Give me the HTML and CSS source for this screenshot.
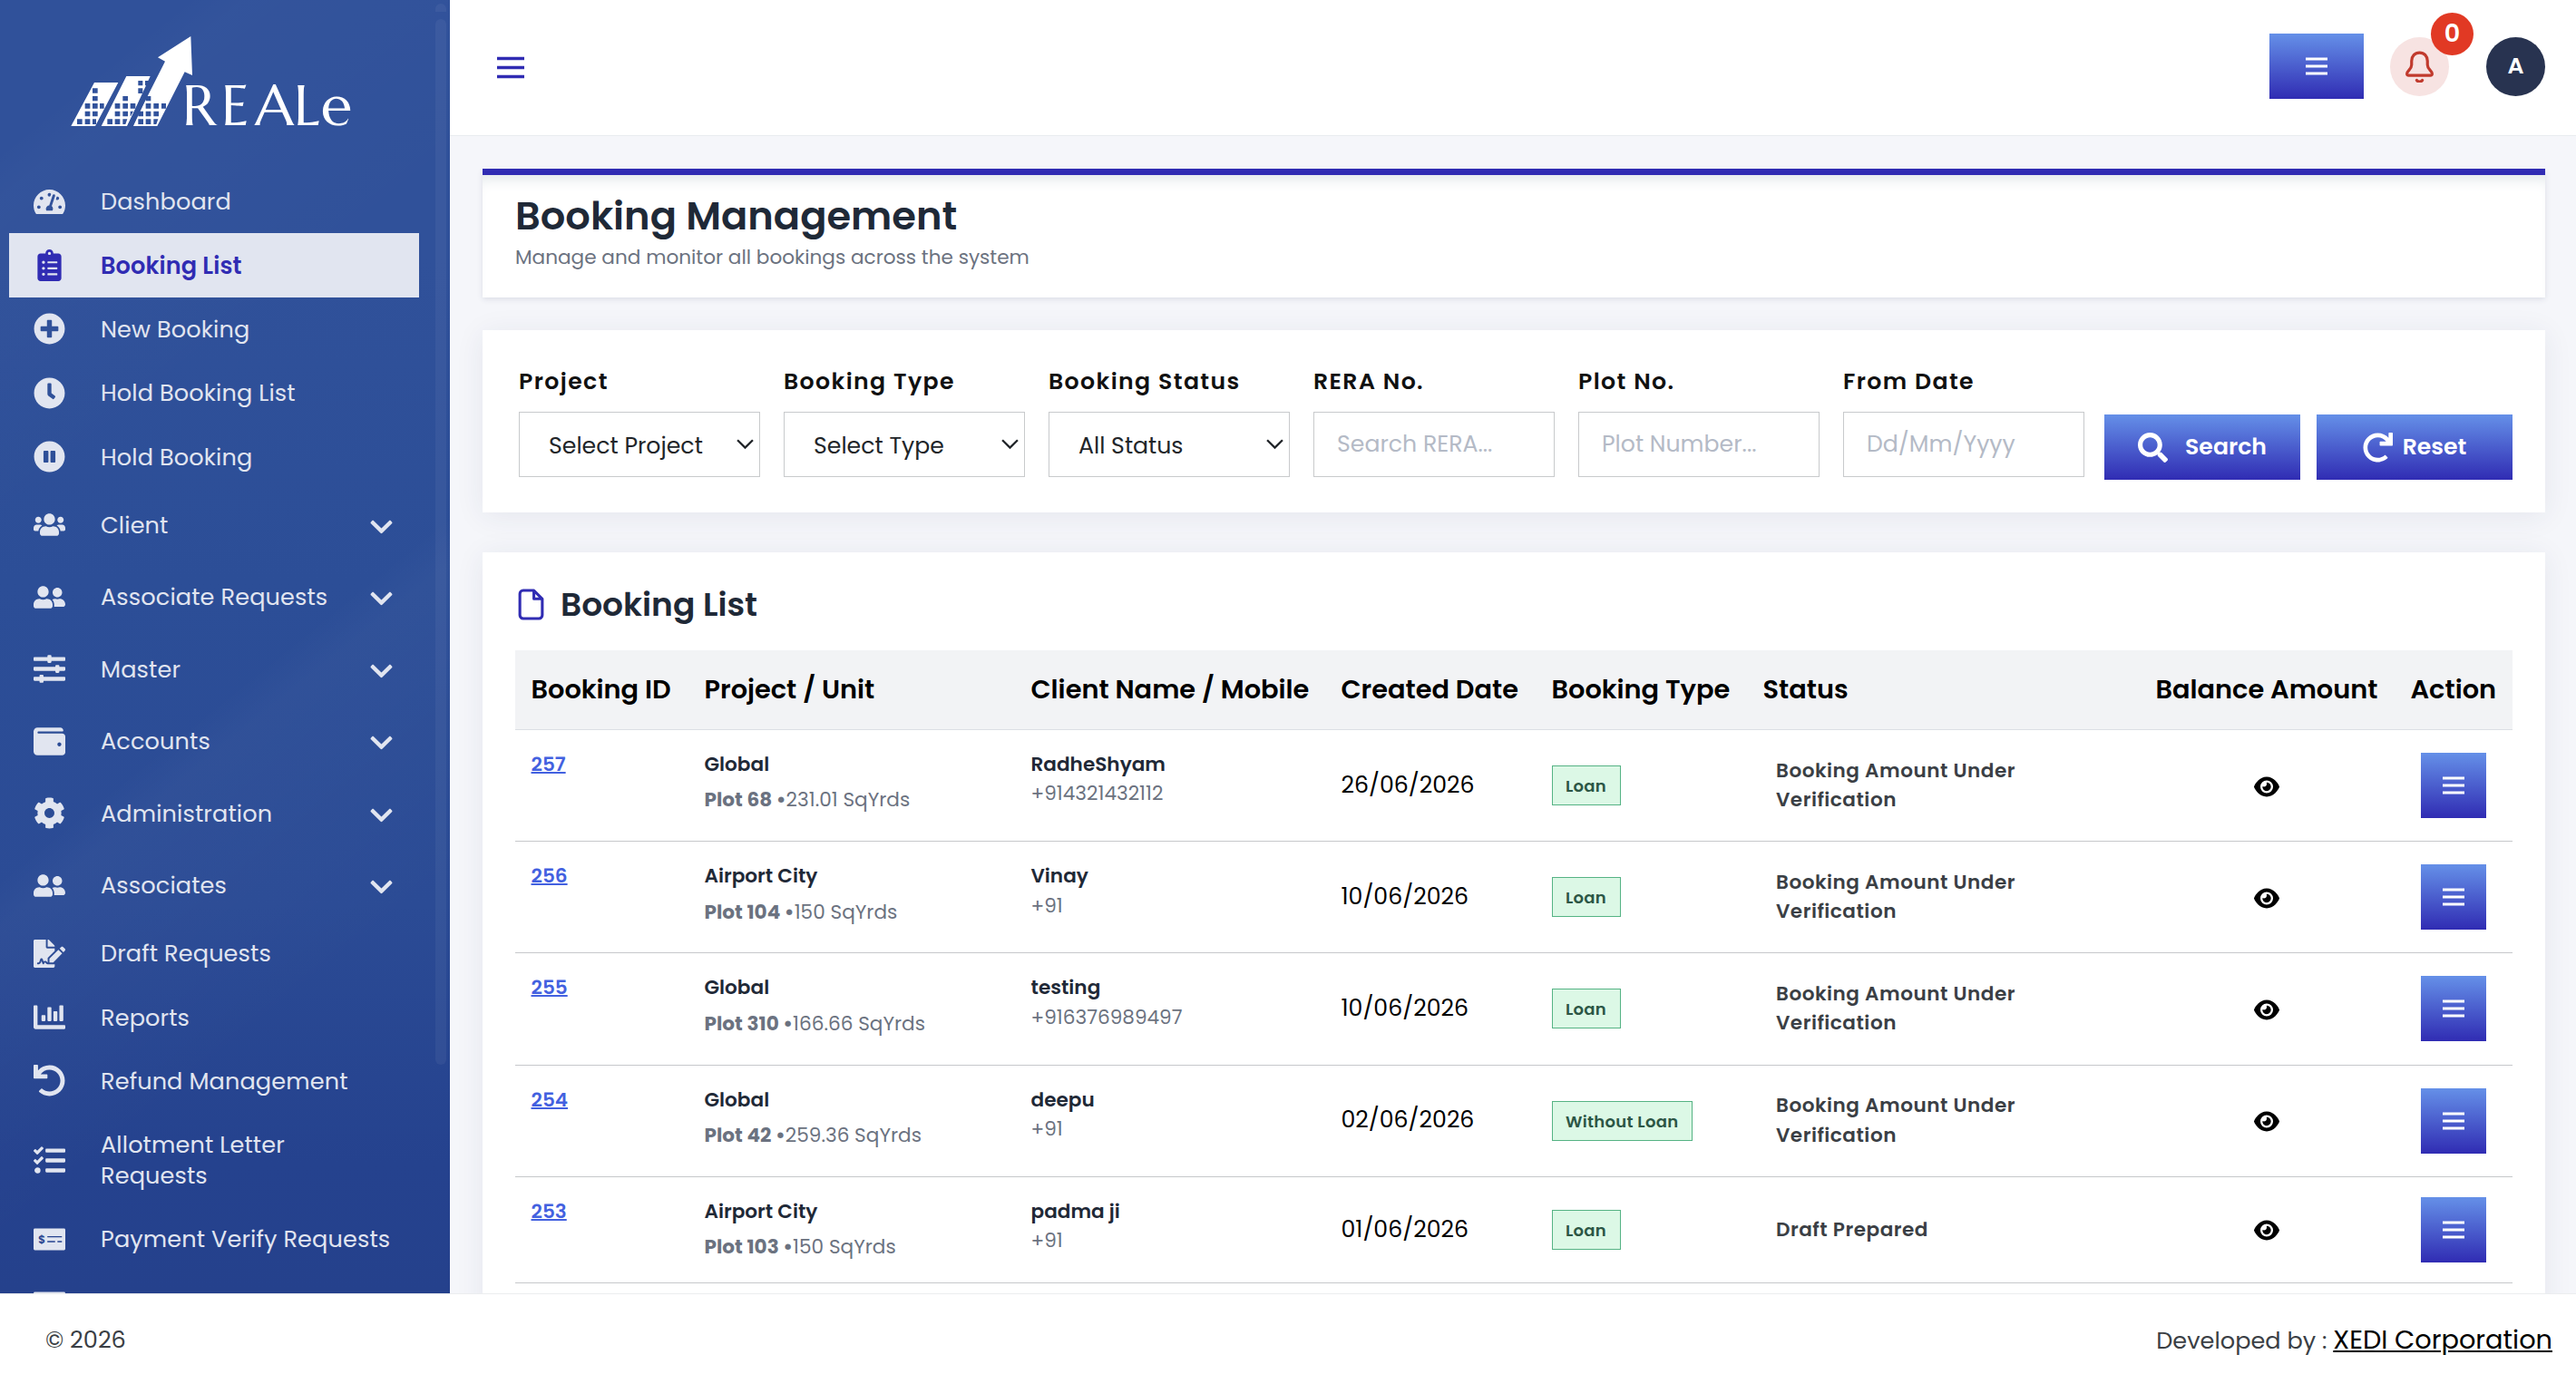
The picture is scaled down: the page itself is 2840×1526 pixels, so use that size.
FILE: index.html
```
<!DOCTYPE html>
<html lang="en">
<head>
	<meta charset="UTF-8">
	<title>Booking Management</title>
	<link rel="stylesheet" href="styles.css">
</head>
<body>

<svg class="sprite" aria-hidden="true">
	<symbol id="i-dashboard" viewBox="0 0 576 512"><path d="M288 32C128.94 32 0 160.94 0 320c0 52.8 14.25 102.26 39.06 144.8 5.61 9.62 16.3 15.2 27.44 15.2h443c11.14 0 21.83-5.58 27.44-15.2C561.75 422.26 576 372.8 576 320c0-159.06-128.94-288-288-288zm0 64c14.71 0 26.58 10.13 30.32 23.65-1.11 2.26-2.64 4.23-3.45 6.67l-9.22 27.67c-5.13 3.49-10.97 6.01-17.64 6.01-17.67 0-32-14.33-32-32S270.33 96 288 96zM96 384c-17.67 0-32-14.33-32-32s14.33-32 32-32 32 14.33 32 32-14.33 32-32 32zm48-160c-17.67 0-32-14.33-32-32s14.33-32 32-32 32 14.33 32 32-14.33 32-32 32zm246.77-72.41l-61.33 184C343.13 347.33 352 364.54 352 384c0 11.72-3.38 22.55-8.88 32H232.88c-5.5-9.45-8.88-20.28-8.88-32 0-33.94 26.5-61.43 59.9-63.59l61.34-184.01c4.17-12.56 17.73-19.45 30.36-15.17 12.57 4.19 19.35 17.79 15.17 30.36zm14.66 57.2l15.52-46.55c3.47-1.29 7.13-2.23 11.05-2.23 17.67 0 32 14.33 32 32s-14.33 32-32 32c-11.38-.01-20.89-6.28-26.57-15.22zM480 384c-17.67 0-32-14.33-32-32s14.33-32 32-32 32 14.33 32 32-14.33 32-32 32z"/></symbol>
	<symbol id="i-list" viewBox="0 0 384 512"><path d="M336 64h-80c0-35.3-28.7-64-64-64s-64 28.7-64 64H48C21.5 64 0 85.5 0 112v352c0 26.5 21.5 48 48 48h288c26.5 0 48-21.5 48-48V112c0-26.5-21.5-48-48-48zM96 424c-13.3 0-24-10.7-24-24s10.7-24 24-24 24 10.7 24 24-10.7 24-24 24zm0-96c-13.3 0-24-10.7-24-24s10.7-24 24-24 24 10.7 24 24-10.7 24-24 24zm0-96c-13.3 0-24-10.7-24-24s10.7-24 24-24 24 10.7 24 24-10.7 24-24 24zm96-192c13.3 0 24 10.7 24 24s-10.7 24-24 24-24-10.7-24-24 10.7-24 24-24zm128 368c0 4.4-3.6 8-8 8H168c-4.4 0-8-3.6-8-8v-16c0-4.4 3.6-8 8-8h144c4.4 0 8 3.6 8 8v16zm0-96c0 4.4-3.6 8-8 8H168c-4.4 0-8-3.6-8-8v-16c0-4.4 3.6-8 8-8h144c4.4 0 8 3.6 8 8v16zm0-96c0 4.4-3.6 8-8 8H168c-4.4 0-8-3.6-8-8v-16c0-4.4 3.6-8 8-8h144c4.4 0 8 3.6 8 8v16z"/></symbol>
	<symbol id="i-plus" viewBox="0 0 512 512"><path d="M256 8C119 8 8 119 8 256s111 248 248 248 248-111 248-248S393 8 256 8zm144 276c0 6.6-5.4 12-12 12h-92v92c0 6.6-5.4 12-12 12h-56c-6.6 0-12-5.4-12-12v-92h-92c-6.6 0-12-5.4-12-12v-56c0-6.6 5.4-12 12-12h92v-92c0-6.6 5.4-12 12-12h56c6.6 0 12 5.4 12 12v92h92c6.6 0 12 5.4 12 12v56z"/></symbol>
	<symbol id="i-clock" viewBox="0 0 512 512"><path d="M256,8C119,8,8,119,8,256S119,504,256,504,504,393,504,256,393,8,256,8Zm92.49,313h0l-20,25a16,16,0,0,1-22.49,2.5h0l-67-49.72a40,40,0,0,1-15-31.23V112a16,16,0,0,1,16-16h32a16,16,0,0,1,16,16V256l58,42.5A16,16,0,0,1,348.49,321Z"/></symbol>
	<symbol id="i-pause" viewBox="0 0 512 512"><path d="M256 8C119 8 8 119 8 256s111 248 248 248 248-111 248-248S393 8 256 8zm-16 328c0 8.8-7.2 16-16 16h-48c-8.8 0-16-7.2-16-16V176c0-8.8 7.2-16 16-16h48c8.8 0 16 7.2 16 16v160zm112 0c0 8.8-7.2 16-16 16h-48c-8.8 0-16-7.2-16-16V176c0-8.8 7.2-16 16-16h48c8.8 0 16 7.2 16 16v160z"/></symbol>
	<symbol id="i-users" viewBox="0 0 640 512"><path d="M96 224c35.3 0 64-28.7 64-64s-28.7-64-64-64-64 28.7-64 64 28.7 64 64 64zm448 0c35.3 0 64-28.7 64-64s-28.7-64-64-64-64 28.7-64 64 28.7 64 64 64zm32 32h-64c-17.6 0-33.5 7.1-45.1 18.6 40.3 22.1 68.9 62 75.1 109.4h66c17.7 0 32-14.3 32-32v-32c0-35.3-28.7-64-64-64zm-256 0c61.9 0 112-50.1 112-112S381.9 32 320 32 208 82.1 208 144s50.1 112 112 112zm76.8 32h-8.3c-20.8 10-43.9 16-68.5 16s-47.6-6-68.5-16h-8.3C179.6 288 128 339.6 128 403.2V432c0 26.5 21.5 48 48 48h288c26.5 0 48-21.5 48-48v-28.8c0-63.6-51.6-115.2-115.2-115.2zm-223.7-13.4C161.5 263.1 145.6 256 128 256H64c-35.3 0-64 28.7-64 64v32c0 17.7 14.3 32 32 32h65.9c6.3-47.4 34.9-87.3 75.2-109.4z"/></symbol>
	<symbol id="i-friends" viewBox="0 0 640 512"><path d="M192 256c61.9 0 112-50.1 112-112S253.9 32 192 32 80 82.1 80 144s50.1 112 112 112zm76.8 32h-8.3c-20.8 10-43.9 16-68.5 16s-47.6-6-68.5-16h-8.3C51.6 288 0 339.6 0 403.2V432c0 26.5 21.5 48 48 48h288c26.5 0 48-21.5 48-48v-28.8c0-63.6-51.6-115.2-115.2-115.2zM480 256c53 0 96-43 96-96s-43-96-96-96-96 43-96 96 43 96 96 96zm48 32h-3.8c-13.9 4.8-28.6 8-44.2 8s-30.3-3.2-44.2-8H432c-20.4 0-39.2 5.9-55.7 15.4 24.4 26.3 39.7 61.2 39.7 99.8v38.4c0 2.2-.5 4.3-.6 6.4H592c26.5 0 48-21.5 48-48 0-61.9-50.1-112-112-112z"/></symbol>
	<symbol id="i-sliders" viewBox="0 0 512 512"><path d="M496 384H160v-16c0-8.8-7.2-16-16-16h-32c-8.8 0-16 7.2-16 16v16H16c-8.8 0-16 7.2-16 16v32c0 8.8 7.2 16 16 16h80v16c0 8.8 7.2 16 16 16h32c8.8 0 16-7.2 16-16v-16h336c8.8 0 16-7.2 16-16v-32c0-8.8-7.2-16-16-16zm0-160h-80v-16c0-8.8-7.2-16-16-16h-32c-8.8 0-16 7.2-16 16v16H16c-8.8 0-16 7.2-16 16v32c0 8.8 7.2 16 16 16h336v16c0 8.8 7.2 16 16 16h32c8.8 0 16-7.2 16-16v-16h80c8.8 0 16-7.2 16-16v-32c0-8.8-7.2-16-16-16zm0-160H288V48c0-8.8-7.2-16-16-16h-32c-8.8 0-16 7.2-16 16v16H16C7.2 64 0 71.2 0 80v32c0 8.8 7.2 16 16 16h208v16c0 8.8 7.2 16 16 16h32c8.8 0 16-7.2 16-16v-16h208c8.8 0 16-7.2 16-16V80c0-8.8-7.2-16-16-16z"/></symbol>
	<symbol id="i-wallet" viewBox="0 0 512 512"><path d="M461.2 128H80c-8.84 0-16-7.16-16-16s7.16-16 16-16h384c8.84 0 16-7.16 16-16 0-26.51-21.49-48-48-48H64C28.65 32 0 60.65 0 96v320c0 35.35 28.65 64 64 64h397.2c28.02 0 50.8-21.53 50.8-48V176c0-26.47-22.78-48-50.8-48zM416 336c-17.67 0-32-14.33-32-32s14.33-32 32-32 32 14.33 32 32-14.33 32-32 32z"/></symbol>
	<symbol id="i-cog" viewBox="0 0 512 512"><path d="M487.4 315.7l-42.6-24.6c4.3-23.2 4.3-47 0-70.2l42.6-24.6c4.9-2.8 7.1-8.6 5.5-14-11.1-35.6-30-67.8-54.7-94.6-3.8-4.1-10-5.1-14.8-2.3L380.8 110c-17.9-15.4-38.5-27.3-60.8-35.1V25.8c0-5.6-3.9-10.5-9.4-11.7-36.7-8.2-74.3-7.8-109.2 0-5.5 1.2-9.4 6.1-9.4 11.7V75c-22.2 7.9-42.8 19.8-60.8 35.1L88.7 85.5c-4.9-2.8-11-1.9-14.8 2.3-24.7 26.7-43.6 58.9-54.7 94.6-1.7 5.4.6 11.2 5.5 14L67.3 221c-4.3 23.2-4.3 47 0 70.2l-42.6 24.6c-4.9 2.8-7.1 8.6-5.5 14 11.1 35.6 30 67.8 54.7 94.6 3.8 4.1 10 5.1 14.8 2.3l42.6-24.6c17.9 15.4 38.5 27.3 60.8 35.1v49.2c0 5.6 3.9 10.5 9.4 11.7 36.7 8.2 74.3 7.8 109.2 0 5.5-1.2 9.4-6.1 9.4-11.7v-49.2c22.2-7.9 42.8-19.8 60.8-35.1l42.6 24.6c4.9 2.8 11 1.9 14.8-2.3 24.7-26.7 43.6-58.9 54.7-94.6 1.5-5.5-.7-11.3-5.6-14.1zM256 336c-44.1 0-80-35.9-80-80s35.9-80 80-80 80 35.9 80 80-35.9 80-80 80z"/></symbol>
	<symbol id="i-sign" viewBox="0 0 576 512"><path d="M218.17 424.14c-2.95-5.92-8.09-6.52-10.17-6.52s-7.22.59-10.02 6.19l-7.67 15.34c-6.37 12.78-25.03 11.37-29.48-2.09L144 386.59l-10.61 31.88c-5.89 17.66-22.38 29.53-41 29.53H80c-8.84 0-16-7.16-16-16s7.16-16 16-16h12.39c4.83 0 9.11-3.08 10.64-7.66l18.19-54.64c3.3-9.81 12.44-16.41 22.78-16.41s19.48 6.59 22.77 16.41l13.88 41.64c19.75-16.19 54.06-9.7 66 14.16 1.89 3.78 5.49 5.95 9.36 6.26v-82.12l128-127.09V160H248c-13.2 0-24-10.8-24-24V0H24C10.7 0 0 10.7 0 24v464c0 13.3 10.7 24 24 24h336c13.3 0 24-10.7 24-24v-40l-128-.11c-16.12-.31-30.58-9.28-37.83-23.75zM384 121.9c0-6.3-2.5-12.4-7-16.9L279.1 7c-4.5-4.5-10.6-7-17-7H256v128h128v-6.1zm-96 225.06V416h68.99l161.68-162.78-67.88-67.88L288 346.96zm280.54-179.63l-31.87-31.87c-9.94-9.94-26.07-9.94-36.01 0l-27.25 27.25 67.88 67.88 27.25-27.25c9.95-9.94 9.95-26.07 0-36.01z"/></symbol>
	<symbol id="i-chart" viewBox="0 0 512 512"><path d="M332.8 320h38.4c6.4 0 12.8-6.4 12.8-12.8V172.8c0-6.4-6.4-12.8-12.8-12.8h-38.4c-6.4 0-12.8 6.4-12.8 12.8v134.4c0 6.4 6.4 12.8 12.8 12.8zm96 0h38.4c6.4 0 12.8-6.4 12.8-12.8V76.8c0-6.4-6.4-12.8-12.8-12.8h-38.4c-6.4 0-12.8 6.4-12.8 12.8v230.4c0 6.4 6.4 12.8 12.8 12.8zm-288 0h38.4c6.4 0 12.8-6.4 12.8-12.8v-70.4c0-6.4-6.4-12.8-12.8-12.8h-38.4c-6.4 0-12.8 6.4-12.8 12.8v70.4c0 6.4 6.4 12.8 12.8 12.8zm96 0h38.4c6.4 0 12.8-6.4 12.8-12.8V108.8c0-6.4-6.4-12.8-12.8-12.8h-38.4c-6.4 0-12.8 6.4-12.8 12.8v198.4c0 6.4 6.4 12.8 12.8 12.8zM496 384H64V80c0-8.84-7.16-16-16-16H16C7.16 64 0 71.16 0 80v336c0 17.67 14.33 32 32 32h464c8.84 0 16-7.16 16-16v-32c0-8.84-7.16-16-16-16z"/></symbol>
	<symbol id="i-undo" viewBox="0 0 512 512"><path d="M212.333 224.333H12c-6.627 0-12-5.373-12-12V12C0 5.373 5.373 0 12 0h48c6.627 0 12 5.373 12 12v78.112C117.773 39.279 184.26 7.47 258.175 8.007c136.906.994 246.448 111.623 246.157 248.532C504.041 393.258 393.12 504 256.333 504c-64.089 0-122.496-24.313-166.51-64.215-5.099-4.622-5.334-12.554-.467-17.42l33.967-33.967c4.474-4.474 11.662-4.717 16.401-.525C170.76 415.336 211.58 432 256.333 432c97.268 0 176-78.716 176-176 0-97.267-78.716-176-176-176-58.496 0-110.28 28.476-142.274 72.333h98.274c6.627 0 12 5.373 12 12v48c0 6.627-5.373 12-12 12z"/></symbol>
	<symbol id="i-tasks" viewBox="0 0 512 512"><path d="M139.61 35.5a12 12 0 0 0-17 0L58.93 98.81l-22.7-22.12a12 12 0 0 0-17 0L3.53 92.41a12 12 0 0 0 0 17l47.59 47.4a12.78 12.78 0 0 0 17.61 0l15.59-15.62L156.52 69a12.09 12.09 0 0 0 .09-17zm0 159.19a12 12 0 0 0-17 0l-63.68 63.72-22.7-22.1a12 12 0 0 0-17 0L3.53 252a12 12 0 0 0 0 17L51 316.5a12.77 12.77 0 0 0 17.6 0l15.7-15.69 72.2-72.22a12 12 0 0 0 .09-16.9zM64 368c-26.49 0-48.59 21.5-48.59 48S37.53 464 64 464a48 48 0 0 0 0-96zm432 16H208a16 16 0 0 0-16 16v32a16 16 0 0 0 16 16h288a16 16 0 0 0 16-16v-32a16 16 0 0 0-16-16zm0-320H208a16 16 0 0 0-16 16v32a16 16 0 0 0 16 16h288a16 16 0 0 0 16-16V80a16 16 0 0 0-16-16zm0 160H208a16 16 0 0 0-16 16v32a16 16 0 0 0 16 16h288a16 16 0 0 0 16-16v-32a16 16 0 0 0-16-16z"/></symbol>
	<symbol id="i-check" viewBox="0 0 640 512">
		<rect y="36" width="640" height="440" rx="26"/>
		<text class="dollar" x="92" y="340">$</text>
		<path class="cut" d="M278 190h294v26H278zM278 290h156v26H278zM482 290h90v26h-90z"/>
	</symbol>
	<symbol id="i-down" viewBox="0 0 448 512"><path d="M207.029 381.476L12.686 187.132c-9.373-9.373-9.373-24.569 0-33.941l22.667-22.667c9.357-9.357 24.522-9.375 33.901-.04L224 284.505l154.745-154.021c9.379-9.335 24.544-9.317 33.901.04l22.667 22.667c9.373 9.373 9.373 24.569 0 33.941L240.971 381.476c-9.373 9.372-24.569 9.372-33.942 0z"/></symbol>
	<symbol id="i-search" viewBox="0 0 512 512"><path d="M505 442.7L405.3 343c-4.5-4.5-10.6-7-17-7H372c27.6-35.3 44-79.7 44-128C416 93.1 322.9 0 208 0S0 93.1 0 208s93.1 208 208 208c48.3 0 92.7-16.4 128-44v16.3c0 6.4 2.5 12.5 7 17l99.7 99.7c9.4 9.4 24.6 9.4 33.9 0l28.3-28.3c9.4-9.4 9.4-24.6.1-34zM208 336c-70.7 0-128-57.2-128-128 0-70.7 57.2-128 128-128 70.7 0 128 57.2 128 128 0 70.7-57.2 128-128 128z"/></symbol>
	<symbol id="i-eye" viewBox="0 0 576 512"><path d="M288 32c-80.8 0-145.5 36.8-192.6 80.6C48.6 156 17.3 208 2.5 243.7c-3.3 7.9-3.3 16.7 0 24.6C17.3 304 48.6 356 95.4 399.4C142.5 443.2 207.2 480 288 480s145.5-36.8 192.6-80.6c46.8-43.5 78.1-95.4 93-131.1c3.3-7.9 3.3-16.7 0-24.6c-14.9-35.7-46.2-87.7-93-131.1C433.5 68.8 368.8 32 288 32zM144 256a144 144 0 1 1 288 0 144 144 0 1 1 -288 0zm144-64c0 35.3-28.7 64-64 64c-7.1 0-13.9-1.2-20.3-3.3c-5.5-1.8-11.9 1.6-11.7 7.4c.3 6.9 1.3 13.8 3.2 20.7c13.7 51.2 66.4 81.6 117.6 67.9s81.6-66.4 67.9-117.6c-11.1-41.5-47.8-69.4-88.6-71.1c-5.8-.2-9.2 6.1-7.4 11.7c2.1 6.4 3.3 13.2 3.3 20.3z"/></symbol>
	<symbol id="i-menu" viewBox="0 0 24 20"><path class="line" d="M0 2h24M0 10h24M0 18h24"/></symbol>
</svg>

<div class="app">
	<aside class="sidebar">
		<svg class="logo" viewBox="0 0 990 360">
			<path class="white" d="M102 183H181L105 327H25zM208 162H292L210 327H125zM421 30L426 159 401 148 310 327H228L336 113 312 100z"/>
			<path class="gap" d="M298 160L221 327"/>
			<g class="windows">
				<path d="M96 202h17v16H96zM96 228h17v16H96zM71 252h17v17H71zM96 252h17v17H96zM120 252h14v17h-14zM71 278h17v17H71zM96 278h17v17H96zM45 304h17v17H45zM71 304h17v17H71zM96 304h12v17H96z"/>
				<path d="M247 177h15v16h-15zM270 177h14l-8 16h-6zM247 202h15v17h-15zM196 228h17v16h-17zM170 252h17v17h-17zM196 252h17v17h-17zM221 252h17v17h-17zM170 278h17v17h-17zM196 278h17v17h-17zM221 278h10l-9 17h-1zM145 304h17v17h-17zM170 304h17v17h-17zM196 304h15l-6 17h-9z"/>
				<path d="M272 228h17v16h-17zM272 252h17v17h-17zM298 252h17v17h-17zM324 252h15v17h-15zM272 278h17v17h-17zM298 278h17v17h-17zM247 304h17v17h-17zM272 304h17v17h-17zM298 304h15l-6 17h-9zM247 278h17v17h-17z"/>
			</g>
			<text class="logo-text" y="324" x="392 521 633 761 851">REALe</text>
		</svg>
		<nav class="menu">
			<a class="item"><svg class="icon"><use href="#i-dashboard"/></svg>Dashboard</a>
			<a class="item active"><svg class="icon"><use href="#i-list"/></svg>Booking List</a>
			<a class="item"><svg class="icon"><use href="#i-plus"/></svg>New Booking</a>
			<a class="item"><svg class="icon"><use href="#i-clock"/></svg>Hold Booking List</a>
			<a class="item"><svg class="icon"><use href="#i-pause"/></svg>Hold Booking</a>
			<a class="item drop"><svg class="icon"><use href="#i-users"/></svg>Client<svg class="arrow"><use href="#i-down"/></svg></a>
			<a class="item drop"><svg class="icon"><use href="#i-friends"/></svg>Associate Requests<svg class="arrow"><use href="#i-down"/></svg></a>
			<a class="item drop"><svg class="icon"><use href="#i-sliders"/></svg>Master<svg class="arrow"><use href="#i-down"/></svg></a>
			<a class="item drop"><svg class="icon"><use href="#i-wallet"/></svg>Accounts<svg class="arrow"><use href="#i-down"/></svg></a>
			<a class="item drop"><svg class="icon"><use href="#i-cog"/></svg>Administration<svg class="arrow"><use href="#i-down"/></svg></a>
			<a class="item drop"><svg class="icon"><use href="#i-friends"/></svg>Associates<svg class="arrow"><use href="#i-down"/></svg></a>
			<a class="item"><svg class="icon"><use href="#i-sign"/></svg>Draft Requests</a>
			<a class="item"><svg class="icon"><use href="#i-chart"/></svg>Reports</a>
			<a class="item"><svg class="icon"><use href="#i-undo"/></svg>Refund Management</a>
			<a class="item two"><svg class="icon"><use href="#i-tasks"/></svg>Allotment Letter<br>Requests</a>
			<a class="item"><svg class="icon"><use href="#i-check"/></svg>Payment Verify Requests</a>
			<a class="item"><svg class="icon"><use href="#i-check"/></svg>File Dispatch</a>
		</nav>
		<div class="scroll"><i class="scroll-up"></i><i class="scroll-thumb"></i></div>
	</aside>

	<div class="page">
		<header class="topbar">
			<svg class="burger"><use href="#i-menu"/></svg>
			<div class="tools">
				<button class="btn quick"><svg class="lines"><use href="#i-menu"/></svg></button>
				<div class="bell">
					<svg viewBox="0 0 30 34"><path d="M15 2C10 2 6.500 5.800 6.500 11v4c0 5-5 6.500-5 9.500 0 1.200.8 1.800 2 1.800h23c1.200 0 2-.6 2-1.800 0-3-5-4.500-5-9.500v-4C23.500 5.800 20 2 15 2zM12 31.500c1.500 2 4.500 2 6 0"/></svg>
					<span class="count">0</span>
				</div>
				<div class="avatar">A</div>
			</div>
		</header>

		<main class="content">
			<section class="card title-card">
				<h1>Booking Management</h1>
				<p>Manage and monitor all bookings across the system</p>
			</section>

			<section class="card filters">
				<div class="field"><label>Project</label><div class="select">Select Project<svg viewBox="0 0 18 11"><path d="M1 1l8 8 8-8"/></svg></div></div>
				<div class="field"><label>Booking Type</label><div class="select">Select Type<svg viewBox="0 0 18 11"><path d="M1 1l8 8 8-8"/></svg></div></div>
				<div class="field"><label>Booking Status</label><div class="select">All Status<svg viewBox="0 0 18 11"><path d="M1 1l8 8 8-8"/></svg></div></div>
				<div class="field"><label>RERA No.</label><input type="text" placeholder="Search RERA..."></div>
				<div class="field"><label>Plot No.</label><input type="text" placeholder="Plot Number..."></div>
				<div class="field"><label>From Date</label><input type="text" placeholder="Dd/Mm/Yyyy"></div>
				<div class="buttons">
					<button class="btn search"><svg><use href="#i-search"/></svg>Search</button>
					<button class="btn reset"><svg><use href="#i-undo"/></svg>Reset</button>
				</div>
			</section>

			<section class="card list">
				<h2><svg viewBox="0 0 28 34"><path d="M17 2H5.500A3.500 3.500 0 0 0 2 5.500v23A3.500 3.500 0 0 0 5.500 32h17a3.500 3.500 0 0 0 3.500-3.500V11zM17 2v9h9"/></svg>Booking List</h2>
				<table>
					<colgroup><col class="c1"><col class="c2"><col class="c3"><col class="c4"><col class="c5"><col class="c6"><col class="c7"><col class="c8"></colgroup>
					<thead>
					<tr><th>Booking ID</th><th>Project / Unit</th><th>Client Name / Mobile</th><th>Created Date</th><th>Booking Type</th><th>Status</th><th>Balance Amount</th><th>Action</th></tr>
					</thead>
					<tbody>
					<tr>
						<td class="top"><a class="id">257</a></td>
						<td class="top"><div class="name">Global</div><div class="plot"><b>Plot 68 •</b>231.01 SqYrds</div></td>
						<td class="top"><div class="name">RadheShyam</div><div class="sub">+914321432112</div></td>
						<td class="date">26/06/2026</td>
						<td><span class="badge">Loan</span></td>
						<td class="status">Booking Amount Under<br>Verification</td>
						<td class="mid"><svg class="eye"><use href="#i-eye"/></svg></td>
						<td class="mid"><button class="btn act"><svg class="lines"><use href="#i-menu"/></svg></button></td>
					</tr>
					<tr>
						<td class="top"><a class="id">256</a></td>
						<td class="top"><div class="name">Airport City</div><div class="plot"><b>Plot 104 •</b>150 SqYrds</div></td>
						<td class="top"><div class="name">Vinay</div><div class="sub">+91</div></td>
						<td class="date">10/06/2026</td>
						<td><span class="badge">Loan</span></td>
						<td class="status">Booking Amount Under<br>Verification</td>
						<td class="mid"><svg class="eye"><use href="#i-eye"/></svg></td>
						<td class="mid"><button class="btn act"><svg class="lines"><use href="#i-menu"/></svg></button></td>
					</tr>
					<tr>
						<td class="top"><a class="id">255</a></td>
						<td class="top"><div class="name">Global</div><div class="plot"><b>Plot 310 •</b>166.66 SqYrds</div></td>
						<td class="top"><div class="name">testing</div><div class="sub">+916376989497</div></td>
						<td class="date">10/06/2026</td>
						<td><span class="badge">Loan</span></td>
						<td class="status">Booking Amount Under<br>Verification</td>
						<td class="mid"><svg class="eye"><use href="#i-eye"/></svg></td>
						<td class="mid"><button class="btn act"><svg class="lines"><use href="#i-menu"/></svg></button></td>
					</tr>
					<tr>
						<td class="top"><a class="id">254</a></td>
						<td class="top"><div class="name">Global</div><div class="plot"><b>Plot 42 •</b>259.36 SqYrds</div></td>
						<td class="top"><div class="name">deepu</div><div class="sub">+91</div></td>
						<td class="date">02/06/2026</td>
						<td><span class="badge">Without Loan</span></td>
						<td class="status">Booking Amount Under<br>Verification</td>
						<td class="mid"><svg class="eye"><use href="#i-eye"/></svg></td>
						<td class="mid"><button class="btn act"><svg class="lines"><use href="#i-menu"/></svg></button></td>
					</tr>
					<tr class="short">
						<td class="top"><a class="id">253</a></td>
						<td class="top"><div class="name">Airport City</div><div class="plot"><b>Plot 103 •</b>150 SqYrds</div></td>
						<td class="top"><div class="name">padma ji</div><div class="sub">+91</div></td>
						<td class="date">01/06/2026</td>
						<td><span class="badge">Loan</span></td>
						<td class="status">Draft Prepared</td>
						<td class="mid"><svg class="eye"><use href="#i-eye"/></svg></td>
						<td class="mid"><button class="btn act"><svg class="lines"><use href="#i-menu"/></svg></button></td>
					</tr>
					</tbody>
				</table>
			</section>
		</main>
	</div>
</div>

<footer class="footer">
	<span>© 2026</span>
	<span>Developed by : <a>XEDI Corporation</a></span>
</footer>

</body>
</html>
```
FILE: styles.css
```
* {
	box-sizing: border-box;
}
body {
	margin: 0;
	height: 1526px;
	overflow: hidden;
	background: #f5f6fa;
	color: #212529;
	font-family: Poppins, Inter, sans-serif;
	font-size: 25.2px;
}
svg {
	fill: currentColor;
	flex: none;
}
.sprite {
	display: none;
}
h1, h2, p {
	margin: 0;
}
.app {
	display: flex;
	height: 1426px;
	overflow: hidden;
}

/* sidebar */
.sidebar {
	position: relative;
	width: 496px;
	height: 1426px;
	overflow: hidden;
	flex: none;
	color: #e1e5f0;
	background:
		linear-gradient(141deg, transparent 53%, rgba(255, 255, 255, .025) 56%, transparent 76%),
		linear-gradient(141deg, transparent 9%, rgba(255, 255, 255, .015) 12%, transparent 34%),
		linear-gradient(#30519a 0%, #30519a 20%, #2c4e97 45%, #2b4b95 70%, #25428e 90%, #25418c 100%);
}
.logo {
	display: block;
	width: 330px;
	height: 120px;
	margin: 30px 0 37px 70px;
	overflow: visible;
}
.white {
	fill: #fff;
}
.gap {
	fill: none;
	stroke: #31529b;
	stroke-width: 18;
}
.windows {
	fill: #31529b;
}
.logo-text {
	fill: #fff;
	font-family: Marcellus, Optima, Lato, sans-serif;
	font-size: 190px;
}
.menu {
	width: 452px;
	margin-left: 10px;
}
.item {
	display: flex;
	align-items: center;
	height: 70.4px;
	padding: 0 29px 0 27px;
	font-size: 25.6px;
	letter-spacing: .1px;
	line-height: 34px;
}
.item .icon {
	width: 35px;
	height: 35px;
	margin-right: 39px;
}
.item.active {
	background: #e1e5f0;
	color: #302cb3;
	font-weight: 600;
}
.item.drop {
	height: 79.5px;
}
.item.two {
	height: 104px;
}
.arrow {
	width: 25px;
	height: 28px;
	margin: 4px 0 0 auto;
}
.dollar {
	fill: #25428e;
	font-size: 230px;
	font-weight: 600;
}
.cut {
	fill: #25428e;
}
.scroll {
	position: absolute;
	top: 4px;
	right: 4px;
	width: 12px;
}
.scroll-up {
	display: block;
	height: 9px;
	border-radius: 6px 6px 0 0;
	background: rgba(255, 255, 255, .05);
}
.scroll-thumb {
	display: block;
	height: 1153px;
	margin-top: 8px;
	border-radius: 6px;
	background: rgba(255, 255, 255, .05);
}

/* top bar */
.page {
	flex: 1;
}
.topbar {
	display: flex;
	justify-content: space-between;
	height: 150px;
	padding: 0 34px 0 52px;
	border-bottom: 1px solid #e9ecef;
	background: #fff;
}
.line {
	fill: none;
	stroke: currentColor;
	stroke-width: 2.8;
}
.burger {
	width: 30px;
	height: 25px;
	margin-top: 62px;
	color: #302cb3;
}
.tools {
	display: flex;
	align-items: center;
	height: 146px;
}
.btn {
	display: flex;
	align-items: center;
	justify-content: center;
	height: 72px;
	padding: 0;
	border: 0;
	color: #fff;
	background: linear-gradient(#6590e8, #302cb3);
	font: 600 25.2px Poppins, Inter, sans-serif;
}
.quick {
	width: 104px;
}
.lines {
	width: 24px;
	height: 20px;
}
.bell {
	position: relative;
	display: flex;
	align-items: center;
	justify-content: center;
	width: 65px;
	height: 65px;
	margin: 0 41px 0 29px;
	border-radius: 50%;
	background: #f7e3e2;
}
.bell svg {
	width: 31px;
	height: 35px;
	fill: none;
	stroke: #c13a2d;
	stroke-width: 3.1;
	stroke-linecap: round;
}
.count {
	position: absolute;
	top: -27px;
	right: -27px;
	width: 47px;
	height: 47px;
	border-radius: 50%;
	background: #e13924;
	color: #fff;
	font-size: 27px;
	font-weight: 600;
	line-height: 46px;
	text-align: center;
}
.avatar {
	width: 65px;
	height: 65px;
	border-radius: 50%;
	background: #283350;
	color: #fff;
	font-size: 25.2px;
	font-weight: 600;
	line-height: 64px;
	text-align: center;
}

/* cards */
.content {
	padding: 36px 34px 0 36px;
}
.card {
	background: #fff;
	box-shadow: 0 4px 30px rgba(40, 50, 90, .08);
}
.title-card {
	height: 142px;
	margin-bottom: 36px;
	padding: 19px 36px 0;
	border-top: 7px solid #302cb3;
	box-shadow: 0 2px 6px rgba(40, 50, 90, .12), inset 0 14px 16px -10px #dfe5e8;
}
.title-card h1 {
	color: #1f2937;
	font-size: 43.2px;
	font-weight: 600;
	line-height: 52px;
}
.title-card p {
	margin-top: 4px;
	color: #6b7280;
	font-size: 21.6px;
	line-height: 32px;
}
.filters {
	display: flex;
	align-items: flex-end;
	gap: 26px;
	height: 201px;
	margin-bottom: 44px;
	padding: 0 36px 39px 40px;
}
.field {
	width: 266px;
}
.field label {
	display: block;
	margin-bottom: 14px;
	color: #111;
	font-weight: 600;
	letter-spacing: 1.4px;
	line-height: 38px;
	white-space: nowrap;
}
.select, .field input {
	display: block;
	width: 100%;
	height: 72px;
	border: 1px solid #c8cacc;
	background: #fff;
	font: 25.2px Poppins, Inter, sans-serif;
}
.select {
	display: flex;
	align-items: center;
	justify-content: space-between;
	padding: 4px 6px 0 32px;
}
.select svg {
	width: 19px;
	height: 12px;
	margin-top: -4px;
	fill: none;
	stroke: #212529;
	stroke-width: 2.2;
}
.field input {
	padding: 0 25px 1px;
}
.field input::placeholder {
	color: #b4bac6;
}
.buttons {
	display: flex;
	gap: 18px;
	margin: 0 0 -3px -4px;
}
.buttons .btn {
	width: 216px;
}
.buttons svg {
	width: 33px;
	height: 33px;
}
.search {
	gap: 19px;
}
.reset {
	gap: 11px;
}
.reset svg {
	transform: scaleX(-1);
}

/* booking table */
.list {
	height: 1000px;
	padding: 36px;
}
.list h2 {
	display: flex;
	align-items: center;
	height: 43px;
	margin-bottom: 29px;
	padding-left: 3px;
	color: #1f2937;
	font-size: 36px;
	font-weight: 600;
}
.list h2 svg {
	width: 29px;
	height: 35px;
	margin-right: 18px;
	fill: none;
	stroke: #302cb3;
	stroke-width: 3;
	stroke-linejoin: round;
}
table {
	width: 2202px;
	border-collapse: separate;
	border-spacing: 0;
	table-layout: fixed;
}
.c1 { width: 191px; }
.c2 { width: 360px; }
.c3 { width: 342px; }
.c4 { width: 232px; }
.c5 { width: 233px; }
.c6 { width: 433px; }
.c7 { width: 281px; }
.c8 { width: 130px; }
th {
	height: 88px;
	padding: 0 0 0 17.5px;
	border-bottom: 1px solid #dcdfe4;
	background: #f2f3f5;
	color: #000;
	font-size: 28.8px;
	font-weight: 600;
	text-align: left;
	white-space: nowrap;
}
td {
	height: 123.2px;
	padding: 0 0 0 17.5px;
	border-bottom: 1px solid #c6c8cb;
	font-size: 21.6px;
	line-height: 32.4px;
}
.short td {
	height: 117px;
}
td.top {
	padding-top: 22px;
	vertical-align: top;
}
.id {
	color: #4361e0;
	font-weight: 600;
	text-decoration: underline;
	text-decoration-thickness: 2px;
}
.name {
	color: #1f2937;
	font-weight: 600;
}
.plot, .sub {
	color: #6b7280;
}
.plot {
	margin-top: 7px;
}
.date {
	color: #000;
	font-size: 25.2px;
}
.badge {
	display: inline-block;
	height: 44px;
	padding: 0 14.5px;
	border: 1px solid #55b384;
	background: #dcf8e6;
	color: #2c5645;
	font-size: 18px;
	font-weight: 600;
	letter-spacing: .3px;
	line-height: 43px;
	vertical-align: middle;
}
td.status {
	padding-left: 32px;
	color: #3b3f45;
	font-weight: 600;
	letter-spacing: .5px;
}
td.mid {
	padding: 0;
}
.mid svg, .mid button {
	margin: 0 auto;
}
td.mid .eye {
	display: block;
	width: 28px;
	height: 25px;
	margin: 2px auto 0 126px;
	color: #000;
}
.act {
	width: 72px;
}

/* footer */
.footer {
	display: flex;
	align-items: center;
	justify-content: space-between;
	height: 100px;
	padding: 1px 26px 0 50px;
	border-top: 1px solid #ebedef;
	background: #fff;
	color: #3b3f45;
	font-size: 25.6px;
}
.footer a {
	color: #000;
	font-size: 28.8px;
	text-decoration: underline;
}
```
